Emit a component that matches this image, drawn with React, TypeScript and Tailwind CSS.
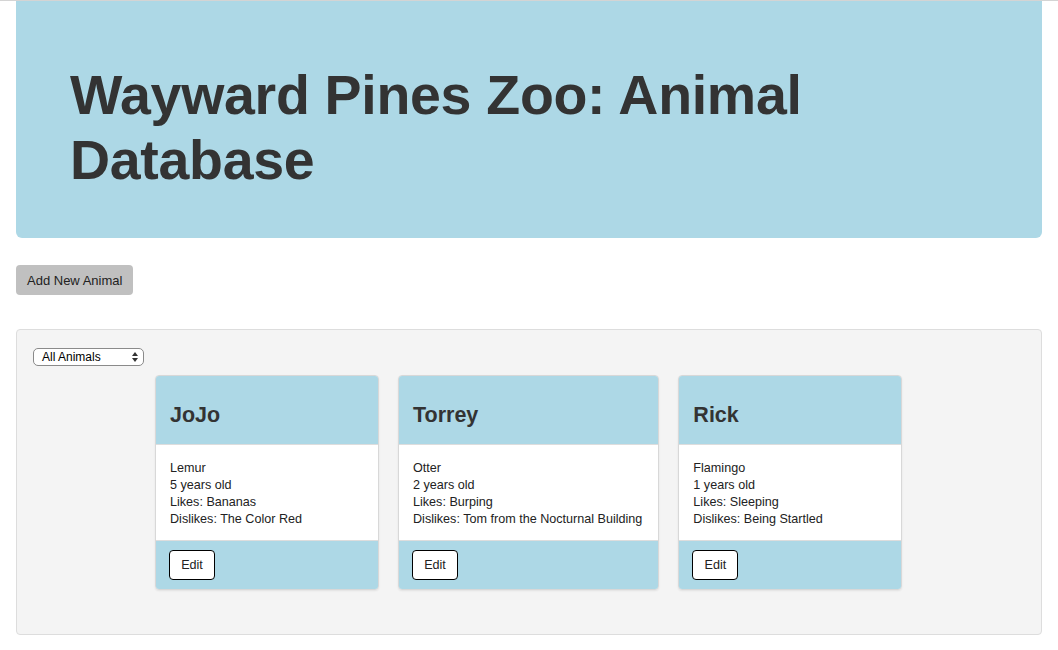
import React from "react";

type Animal = {
    name: string;
    species: string;
    age: number;
    likes: string;
    dislikes: string;
};

const animals: Animal[] = [
    { name: "JoJo", species: "Lemur", age: 5, likes: "Bananas", dislikes: "The Color Red" },
    { name: "Torrey", species: "Otter", age: 2, likes: "Burping", dislikes: "Tom from the Nocturnal Building" },
    { name: "Rick", species: "Flamingo", age: 1, likes: "Sleeping", dislikes: "Being Startled" },
];

const App = () => {
    return (
        <div className="min-h-[650px] bg-white text-[#333] font-['Liberation_Sans',Arial,sans-serif]">
            <div className="h-px bg-[#d4d4d4]" />
            <div className="px-4">
                {/* Jumbotron */}
                <div className="h-[237px] bg-[#add8e6] rounded-b-md pl-[54px] pt-[62px]">
                    <h1 className="text-[55.5px] leading-[65px] font-bold text-[#333] tracking-[-0.3px]">
                        Wayward Pines Zoo: Animal
                        <br />
                        Database
                    </h1>
                </div>

                <button className="mt-[27px] h-[30px] px-[11px] bg-[#c0c0c0] rounded text-[13px] text-[#222] pt-px">
                    Add New Animal
                </button>

                {/* Animal list */}
                <div className="mt-[34px] h-[306px] bg-[#f4f4f4] border border-[#dddddd] rounded pl-4 pt-[18px]">
                    <div className="w-[111px] h-[18px] border border-[#8a8a8a] rounded-[5px] bg-white flex items-center justify-between pl-2 pr-[5px] text-[12px] text-black">
                        <span>All Animals</span>
                        <svg width="6" height="10" viewBox="0 0 6 10">
                            <path d="M3 0 L6 4 L0 4 Z" fill="#333" />
                            <path d="M3 10 L6 6 L0 6 Z" fill="#333" />
                        </svg>
                    </div>
                    <div className="flex gap-[19px] pl-[122px] mt-[9px]">
                        {animals.map((animal, index) => (
                            <div
                                key={index}
                                className="min-w-[224px] rounded overflow-hidden border border-[#d8d8d8] shadow-[0_1px_2px_rgba(0,0,0,0.08)]"
                            >
                                <div className="h-[68px] bg-[#add8e6] px-[14px] flex items-center">
                                    <h3 className="text-[21.5px] font-bold text-[#333] pt-[10px]">{animal.name}</h3>
                                </div>
                                <div className="bg-white border-y border-[#dddddd] pl-[14px] pr-[16px] pt-[15px] pb-[12px] text-[12.6px] leading-[17px] text-[#222]">
                                    <p>{animal.species}</p>
                                    <p>{animal.age} years old</p>
                                    <p>Likes: {animal.likes}</p>
                                    <p>Dislikes: {animal.dislikes}</p>
                                </div>
                                <div className="h-[48px] bg-[#add8e6] px-[13px] pt-[9px]">
                                    <button className="h-[30px] w-[46px] bg-white border border-black rounded text-[12.6px] text-[#222]">
                                        Edit
                                    </button>
                                </div>
                            </div>
                        ))}
                    </div>
                </div>
            </div>
        </div>
    );
};

export default App;
